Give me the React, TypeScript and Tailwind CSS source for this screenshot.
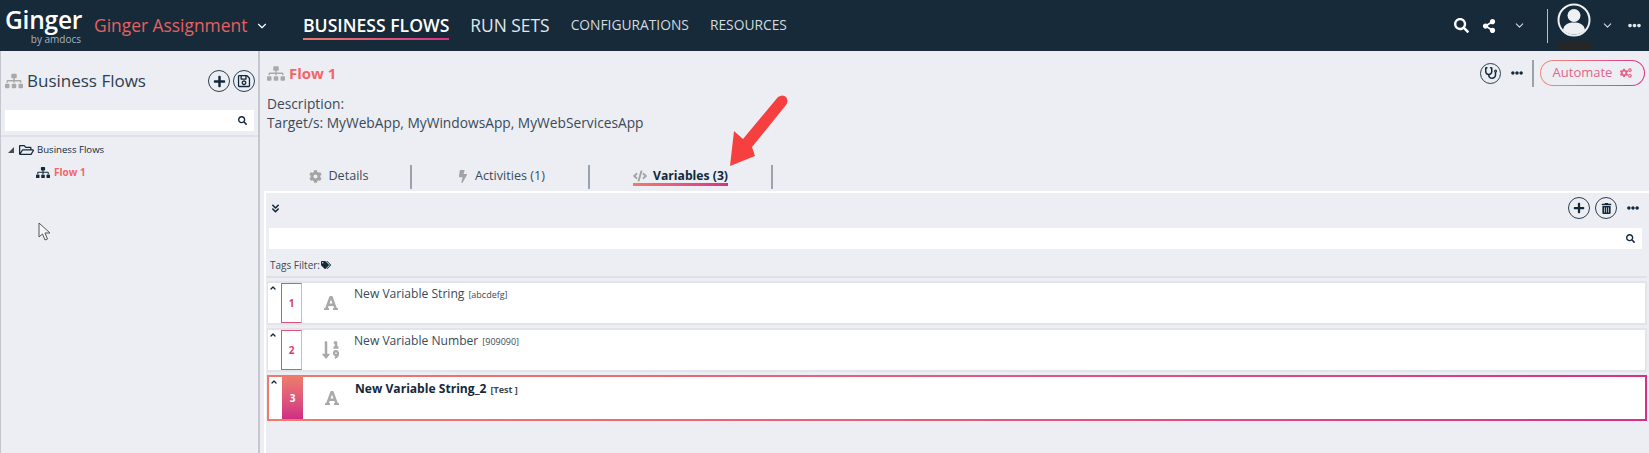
import { FaBolt, FaCode, FaCog, FaCogs, FaEllipsisH, FaFont, FaPlus, FaSearch, FaShareAlt, FaSitemap, FaSortNumericDown, FaStethoscope, FaTags, FaTrashAlt } from "react-icons/fa";
import { FaRegFolderOpen, FaRegSave } from "react-icons/fa";
import { ChevronDown, ChevronsDown, ChevronUp } from "lucide-react";
import type { ReactNode } from "react";

const FONT = "font-['Open_Sans','Noto_Sans',sans-serif]";

const VARIABLES = [
  { id: 1, name: "New Variable String", value: "[abcdefg]", numeric: false },
  { id: 2, name: "New Variable Number", value: "[909090]", numeric: true },
  { id: 3, name: "New Variable String_2", value: "[Test ]", numeric: false, active: true },
];

const CircleButton = ({ children }: { children: ReactNode }) => (
  <button className="w-[22px] h-[22px] rounded-full border border-[#2a3f50] flex items-center justify-center text-[#12293b]">
    {children}
  </button>
);

const SearchBox = ({ className }: { className: string }) => (
  <div className={`bg-white h-[21px] flex items-center justify-end pr-[7px] ${className}`}>
    <FaSearch className="w-[9px] h-[9px] text-[#12293b]" />
  </div>
);

const Tab = ({ icon, label, active, width }: { icon: ReactNode; label: string; active?: boolean; width: string }) => (
  <div className={`h-[24px] border-r-2 border-[#9aa3ad] flex items-start justify-center ${width}`}>
    <div className="relative flex items-center gap-[6px] h-[20px] mt-[1px]">
      <span className="text-[#a3a3a3]">{icon}</span>
      <span className={active ? "text-[12.2px] font-bold text-[#12293b]" : "text-[12.6px] text-[#3a4a58]"}>{label}</span>
      {active && <div className="absolute left-0 right-0 top-[17px] h-[3px] bg-linear-to-r from-[#ee7b6b] to-[#d82f86]" />}
    </div>
  </div>
);

const VariableRow = ({ v }: { v: (typeof VARIABLES)[number] }) => {
  const body = (
    <div className={`flex bg-white ${v.active ? "h-[42px]" : "h-[44px] border-2 border-[#e2e4ea] border-l-[1px]"}`}>
      <div className="w-[13px] shrink-0 pl-[1px] pt-[1px]">
        <ChevronUp className="w-[8px] h-[8px] text-[#12293b]" strokeWidth={4} />
      </div>
      {v.active ? (
        <div className="w-[21px] shrink-0 bg-linear-to-b from-[#ee7b6b] to-[#d02c85] flex items-center justify-center text-white text-[10px] font-bold">
          {v.id}
        </div>
      ) : (
        <div className="w-[21px] shrink-0 border border-[#d9537f] border-r-[#eeaabd] flex items-center justify-center text-[#d9406f] text-[10px] font-bold">
          {v.id}
        </div>
      )}
      <div className="w-[52px] pl-[6px] shrink-0 flex items-center justify-center text-[#a9a9a9]">
        {v.numeric ? <FaSortNumericDown className="w-[20px] h-[20px]" /> : <FaFont className="w-[16px] h-[16px]" />}
      </div>
      <div className={v.active ? "pt-[1px] leading-[18px]" : "leading-[18px]"}>
        <span className={v.active ? "text-[12.1px] font-bold text-[#12293b]" : "text-[12.1px] text-[#3a4a58]"}>{v.name}</span>
        <span className={v.active ? "ml-[4px] text-[9px] font-bold text-[#3a4a58]" : "ml-[4px] text-[9px] text-[#3a4a58]"}>{v.value}</span>
      </div>
    </div>
  );
  if (v.active) return <div className="p-[2px] bg-linear-to-r from-[#ee7b6b] to-[#d82f86]">{body}</div>;
  return body;
};

export default function App() {
  return (
    <div className={`relative w-[1649px] h-[453px] overflow-hidden bg-[#eceef4] flex flex-col ${FONT}`}>
      {/* top nav */}
      <header className="h-[51px] shrink-0 bg-[#162a3a] flex items-center text-white">
        <div className="w-[90px] pl-[5px] shrink-0 flex flex-col items-start">
          <span className="text-[24.5px] font-semibold leading-[24px] tracking-[-0.2px]">Ginger</span>
          <span className="self-end mr-[9px] mt-[2px] text-[10px] leading-[10px] text-[#aab4bc]">by amdocs</span>
        </div>
        <span className="ml-[4px] text-[17.4px] text-[#e8605f] w-[152px] whitespace-nowrap">Ginger Assignment</span>
        <ChevronDown className="ml-[9px] w-[14px] h-[14px] text-white" />
        <nav className="ml-[34px] flex items-center">
          <div className="relative">
            <span className="text-[17.6px] font-semibold whitespace-nowrap">BUSINESS FLOWS</span>
            <div className="absolute left-0 right-0 top-[26px] h-[2px] bg-linear-to-r from-[#ee7b6b] to-[#d82f86]" />
          </div>
          <span className="ml-[21px] text-[17.4px] text-[#e4e7ea] whitespace-nowrap">RUN SETS</span>
          <span className="ml-[21px] text-[13.8px] text-[#d5dade] whitespace-nowrap">CONFIGURATIONS</span>
          <span className="ml-[21px] text-[13.8px] text-[#d5dade] whitespace-nowrap">RESOURCES</span>
        </nav>
        <div className="ml-auto flex items-center h-full">
          <FaSearch className="w-[15px] h-[15px]" />
          <FaShareAlt className="ml-[13px] w-[14px] h-[14px]" />
          <ChevronDown className="ml-[17px] w-[13px] h-[13px] text-[#d5dade]" />
          <div className="ml-[21px] w-px h-[34px] bg-[#b8c0c6]" />
          <div className="ml-[9px] flex flex-col items-center pt-[1px]">
            <svg viewBox="0 0 34 34" className="w-[34px] h-[34px]">
              <circle cx="17" cy="17" r="15.5" fill="#162a3a" stroke="#eef0f2" strokeWidth="2" />
              <circle cx="17" cy="12.5" r="6.5" fill="#eef0f2" />
              <path d="M6 27c1-6 6-7.500 11-7.500S27 21 28 27c-3 3-7 4.500-11 4.500S9 30 6 27z" fill="#eef0f2" />
            </svg>
            <div className="mt-[4px] w-[34px] h-[9px] bg-[#262626]" />
          </div>
          <ChevronDown className="ml-[10px] w-[13px] h-[13px] text-[#d5dade]" />
          <FaEllipsisH className="ml-[14px] mr-[8px] w-[13px] h-[13px] text-[#e4e7ea]" />
        </div>
      </header>

      <div className="flex flex-1 min-h-0">
        {/* business flows tree */}
        <aside className="w-[260px] shrink-0 border-r-2 border-[#c4c8ce] border-l border-l-[#c4c8ce] flex flex-col">
          <div className="h-[86px] shrink-0 border-b-2 border-[#dfe1e6] pl-[4px] pr-[3px]">
            <div className="flex items-center h-[59px] pt-[1px]">
              <FaSitemap className="w-[18px] h-[18px] text-[#a9a9a9]" />
              <span className="ml-[4px] text-[17px] text-[#2b3f50]">Business Flows</span>
              <div className="ml-auto flex items-center gap-[3px]">
                <CircleButton><FaPlus className="w-[13px] h-[13px]" /></CircleButton>
                <CircleButton><FaRegSave className="w-[14px] h-[14px]" /></CircleButton>
              </div>
            </div>
            <SearchBox className="mr-px" />
          </div>
          <div className="pt-[3px] pl-[7px]">
            <div className="flex items-center h-[20px]">
              <span className="w-0 h-0 border-l-[6px] border-l-transparent border-b-[6px] border-b-[#4a4a4a]" />
              <FaRegFolderOpen className="ml-[5px] w-[15px] h-[14px] text-[#12293b]" />
              <span className="ml-[3px] text-[9.6px] text-[#12293b]">Business Flows</span>
            </div>
            <div className="flex items-center h-[20px] mt-[2px] ml-[28px]">
              <FaSitemap className="w-[14px] h-[13px] text-[#12293b]" />
              <span className="ml-[4px] text-[10px] font-bold text-[#f2666a]">Flow 1</span>
            </div>
          </div>
        </aside>

        {/* flow details */}
        <main className="flex-1 min-w-0 flex flex-col">
          <div className="h-[114px] shrink-0 pl-[7px] pr-[4px] pt-[9px]">
            <div className="flex items-center h-[26px]">
              <FaSitemap className="w-[18px] h-[17px] text-[#a9a9a9]" />
              <span className="ml-[4px] text-[15px] font-bold text-[#f2666a]">Flow 1</span>
              <div className="ml-auto flex items-center h-[27px]">
                <button className="w-[21px] h-[21px] rounded-full border border-[#2a3f50] flex items-center justify-center">
                  <FaStethoscope className="w-[12px] h-[12px] text-[#12293b]" />
                </button>
                <FaEllipsisH className="ml-[10px] w-[12px] h-[12px] text-[#12293b]" />
                <div className="ml-[9px] w-[2px] h-[27px] bg-[#9aa3ad]" />
                <div className="ml-[6px] rounded-full p-px bg-linear-to-r from-[#ee8f80] to-[#d82f86]">
                  <div className="w-[103px] h-[24px] rounded-full bg-[#eceef4] flex items-center justify-center gap-[8px]">
                    <span className="text-[13px] text-[#e0658a]">Automate</span>
                    <FaCogs className="w-[12px] h-[12px] text-[#e0658a]" />
                  </div>
                </div>
              </div>
            </div>
            <p className="mt-[8px] text-[13.75px] leading-[19px] text-[#3a4a58]">Description:</p>
            <p className="text-[13.75px] leading-[19px] text-[#3a4a58]">Target/s: MyWebApp, MyWindowsApp, MyWebServicesApp</p>
          </div>

          <div className="flex pl-[4px] h-[26px] shrink-0">
            <Tab width="w-[148px] pl-[4px]" label="Details" icon={<FaCog className="w-[13px] h-[13px]" />} />
            <Tab width="w-[178px] pl-[2px]" label="Activities (1)" icon={<FaBolt className="w-[12px] h-[13px]" />} />
            <Tab width="w-[183px]" active label="Variables (3)" icon={<FaCode className="w-[14px] h-[14px]" />} />
          </div>

          <section className="flex-1 min-h-0 ml-[4px] border-t-2 border-l-2 border-white pr-[2px]">
            <div className="h-[35px] flex items-center pl-[3px] pr-[8px] pb-[5px]">
              <ChevronsDown className="w-[13px] h-[13px] text-[#12293b]" strokeWidth={3} />
              <div className="ml-auto flex items-center gap-[5px]">
                <CircleButton><FaPlus className="w-[12px] h-[12px]" /></CircleButton>
                <CircleButton><FaTrashAlt className="w-[11px] h-[11px]" /></CircleButton>
                <FaEllipsisH className="ml-[5px] w-[12px] h-[12px] text-[#12293b]" />
              </div>
            </div>
            <SearchBox className="ml-[3px] mr-[5px]" />
            <div className="h-[29px] flex items-center pl-[4px] pt-[5px] border-b-2 border-[#dfe1e6] text-[#3a4a58]">
              <span className="text-[10px]">Tags Filter:</span>
              <FaTags className="ml-[1px] w-[10px] h-[10px] text-[#12293b]" />
            </div>
            <div className="pl-px pt-[3px] flex flex-col gap-[3px]">
              {VARIABLES.map((v) => <VariableRow key={v.id} v={v} />)}
            </div>
          </section>
        </main>
      </div>

      {/* annotation arrow over the tabs */}
      <svg className="absolute left-[722px] top-[90px] w-[75px] h-[85px]" viewBox="722 90 75 85">
        <path d="M730 166 L734 131 L743 139 L778 97 Q783 94 786 97 Q789 101 786 105 L752 147 L755 156 Z" fill="#f5403f" />
      </svg>
      {/* mouse cursor */}
      <svg className="absolute left-[38px] top-[222px] w-[14px] h-[19px]" viewBox="0 0 14 19">
        <path d="M1 1 L1 15 L4.500 12 L7 18 L9.500 17 L7 11 L12 11 Z" fill="#f4f5f8" stroke="#555" strokeWidth="1" />
      </svg>
    </div>
  );
}
